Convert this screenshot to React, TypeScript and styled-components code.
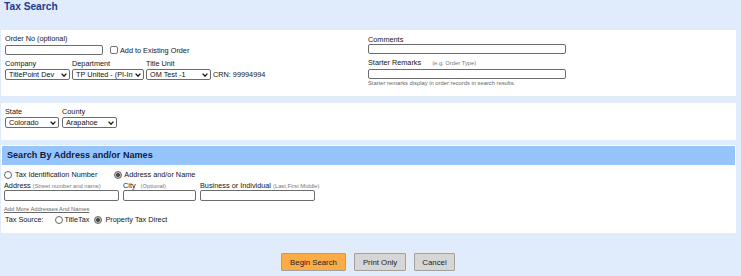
import React from 'react';
import styled, { createGlobalStyle } from 'styled-components';

const Global = createGlobalStyle`
  html, body { margin: 0; padding: 0; background: #e0ebfc; }
  body { font-family: "Liberation Sans", Arial, sans-serif; color: #151515; }
  * { box-sizing: border-box; }
`;

const Page = styled.div`
  width: 741px;
  height: 276px;
  background: #e0ebfc;
  overflow: hidden;
  display: flex;
  flex-direction: column;
`;

const Title = styled.h1`
  margin: 0;
  padding: 0 0 0 4px;
  font-size: 10.2px;
  line-height: 14px;
  font-weight: bold;
  color: #1b3c8e;
`;

const Panel = styled.section<{ $mt: number; $h: number; $pad: string }>`
  margin: ${(p) => p.$mt}px 0 0 1px;
  width: 735px;
  height: ${(p) => p.$h}px;
  background: #fff;
  padding: ${(p) => p.$pad};
`;

const TwoCol = styled.div`
  display: grid;
  grid-template-columns: 363px 1fr;
`;

const Col = styled.div`
  display: flex;
  flex-direction: column;
`;

const Label = styled.label<{ $mt?: number; $lh?: number }>`
  display: block;
  font-size: 7.3px;
  line-height: ${(p) => p.$lh ?? 9}px;
  margin-top: ${(p) => p.$mt ?? 0}px;
  color: #151515;
  white-space: nowrap;
`;

const Hint = styled.span<{ $ml?: number }>`
  font-size: 5.8px;
  color: #777;
  margin-left: ${(p) => p.$ml ?? 2}px;
`;

const Helper = styled.div`
  font-size: 5.8px;
  line-height: 7px;
  color: #666;
  margin-top: 1px;
`;

const TextBox = styled.input<{ $w: number; $h?: number; $mt?: number }>`
  display: block;
  width: ${(p) => p.$w}px;
  height: ${(p) => p.$h ?? 10}px;
  margin: ${(p) => p.$mt ?? 0}px 0 0 0;
  padding: 0;
  border: 1px solid #6c6c6c;
  border-radius: 2px;
  background: #fff;
  font-size: 7px;
`;

const SelectWrap = styled.div<{ $w: number }>`
  position: relative;
  width: ${(p) => p.$w}px;
  height: 11px;
  margin-top: 1px;
`;

const Select = styled.select`
  appearance: none;
  display: block;
  width: 100%;
  height: 11px;
  margin: 0;
  padding: 0 10px 0 3px;
  border: 1px solid #6c6c6c;
  border-radius: 2px;
  background: #fff;
  color: #111;
  font-family: "Liberation Sans", Arial, sans-serif;
  font-size: 7.3px;
  line-height: 9px;
  overflow: hidden;
  white-space: nowrap;
`;

const Chevron = styled.svg`
  position: absolute;
  right: 3px;
  top: 3.5px;
  width: 6px;
  height: 4px;
  pointer-events: none;
`;

const Row = styled.div<{ $gap: number; $mt?: number; $align?: string }>`
  display: flex;
  gap: ${(p) => p.$gap}px;
  align-items: ${(p) => p.$align ?? 'center'};
  margin-top: ${(p) => p.$mt ?? 0}px;
`;

const Field = styled.div`
  display: flex;
  flex-direction: column;
`;

const Check = styled.input`
  appearance: none;
  width: 8px;
  height: 8px;
  margin: 0 0 0 7px;
  border: 1px solid #777;
  border-radius: 2px;
  background: #fff;
`;

const Inline = styled.span<{ $ml?: number; $lh?: number }>`
  font-size: 7.3px;
  line-height: ${(p) => p.$lh ?? 9}px;
  margin-left: ${(p) => p.$ml ?? 0}px;
  white-space: nowrap;
`;

const HeaderBand = styled.h2`
  margin: 0;
  height: 19px;
  padding-left: 5px;
  background: #96c5fe;
  font-size: 9.1px;
  line-height: 19px;
  font-weight: bold;
  color: #102040;
`;

const SectionBody = styled.div`
  padding-left: 2px;
  display: flex;
  flex-direction: column;
`;

const RadioInput = styled.input`
  appearance: none;
  width: 8px;
  height: 8px;
  margin: 0;
  border: 1px solid #666;
  border-radius: 50%;
  background: #fff;
  &:checked {
    background: radial-gradient(circle, #4a4a4a 0 1.6px, #bdbdbd 2.2px);
  }
`;

const RadioOpt = styled.label<{ $gap: number }>`
  display: flex;
  align-items: center;
  gap: ${(p) => p.$gap}px;
  font-size: 7.3px;
  line-height: 9px;
  white-space: nowrap;
`;

const RadioGroup = styled.div<{ $gap: number; $ml?: number }>`
  display: flex;
  align-items: center;
  gap: ${(p) => p.$gap}px;
  margin-left: ${(p) => p.$ml ?? 0}px;
`;

const LinkText = styled.a`
  font-size: 5.8px;
  line-height: 8px;
  color: #666;
  text-decoration: underline;
  margin-top: 4px;
  align-self: flex-start;
`;

const ButtonBar = styled.div`
  width: 736px;
  margin-top: 20px;
  display: flex;
  justify-content: center;
  gap: 8px;
`;

const Btn = styled.button<{ $primary?: boolean; $w: number }>`
  width: ${(p) => p.$w}px;
  height: 18px;
  padding: 0;
  border: 1px solid #a0a0a0;
  border-radius: 1px;
  background: ${(p) => (p.$primary ? '#fbac46' : '#d6d6d6')};
  color: #222;
  font-family: "Liberation Sans", Arial, sans-serif;
  font-size: 7.8px;
  box-shadow: 0 0 0 1px #ececec;
`;

function Dropdown({ w, value }: { w: number; value: string }) {
  return (
    <SelectWrap $w={w}>
      <Select defaultValue={value}>
        <option value={value}>{value}</option>
      </Select>
      <Chevron viewBox="0 0 6 4">
        <polyline points="0.6,0.6 3,3.2 5.4,0.6" fill="none" stroke="#111" strokeWidth="1.3" />
      </Chevron>
    </SelectWrap>
  );
}

function Radio({ label, checked, gap = 2, name }: { label: string; checked?: boolean; gap?: number; name: string }) {
  return (
    <RadioOpt $gap={gap}>
      <RadioInput type="radio" name={name} defaultChecked={checked} />
      {label}
    </RadioOpt>
  );
}

export default function App() {
  return (
    <Page>
      <Global />
      <Title>Tax Search</Title>

      <Panel $mt={16} $h={66} $pad="4px 4px 0 4px">
        <TwoCol>
          <Col>
            <Label>Order No (optional)</Label>
            <Row $gap={0} $mt={2}>
              <TextBox $w={98} />
              <Check type="checkbox" />
              <Inline $ml={2}>Add to Existing Order</Inline>
            </Row>
            <Row $gap={2} $mt={4} $align="flex-end">
              <Field>
                <Label>Company</Label>
                <Dropdown w={65} value="TitlePoint Dev" />
              </Field>
              <Field>
                <Label>Department</Label>
                <Dropdown w={72} value="TP United - (PI-Internal)" />
              </Field>
              <Field>
                <Label>Title Unit</Label>
                <Dropdown w={65} value="OM Test -1" />
              </Field>
              <Inline $lh={11}>CRN: 99994994</Inline>
            </Row>
          </Col>
          <Col>
            <Label $mt={0.5}>Comments</Label>
            <TextBox $w={198} />
            <Label $mt={4}>
              Starter Remarks<Hint $ml={11}>(e.g. Order Type)</Hint>
            </Label>
            <TextBox $w={198} $mt={1} />
            <Helper>Starter remarks display in order records in search results.</Helper>
          </Col>
        </TwoCol>
      </Panel>

      <Panel $mt={7} $h={37} $pad="4px 4px 0 4px">
        <Row $gap={3} $align="flex-end">
          <Field>
            <Label>State</Label>
            <Dropdown w={54} value="Colorado" />
          </Field>
          <Field>
            <Label>County</Label>
            <Dropdown w={55} value="Arapahoe" />
          </Field>
        </Row>
      </Panel>

      <Panel $mt={5} $h={88} $pad="1px 1px 0 1px">
        <HeaderBand>Search By Address and/or Names</HeaderBand>
        <SectionBody>
          <RadioGroup $gap={17} style={{ marginTop: 5 }}>
            <Radio name="mode" label="Tax Identification Number" gap={3} />
            <Radio name="mode" label="Address and/or Name" checked />
          </RadioGroup>
          <Row $gap={4} $mt={3} $align="flex-end">
            <Field>
              <Label $lh={8}>
                Address<Hint>(Street number and name)</Hint>
              </Label>
              <TextBox $w={115} $h={11} />
            </Field>
            <Field>
              <Label $lh={8}>
                City<Hint $ml={5}>(Optional)</Hint>
              </Label>
              <TextBox $w={73} $h={11} />
            </Field>
            <Field>
              <Label $lh={8}>
                Business or Individual<Hint>(Last,First Middle)</Hint>
              </Label>
              <TextBox $w={115} $h={11} />
            </Field>
          </Row>
          <LinkText>Add More Addresses And Names</LinkText>
          <Row $gap={0} $mt={2}>
            <Inline $ml={1}>Tax Source:</Inline>
            <RadioGroup $gap={5} $ml={11}>
              <Radio name="src" label="TitleTax" gap={2} />
              <Radio name="src" label="Property Tax Direct" gap={3} checked />
            </RadioGroup>
          </Row>
        </SectionBody>
      </Panel>

      <ButtonBar>
        <Btn $primary $w={65}>Begin Search</Btn>
        <Btn $w={52}>Print Only</Btn>
        <Btn $w={41}>Cancel</Btn>
      </ButtonBar>
    </Page>
  );
}
